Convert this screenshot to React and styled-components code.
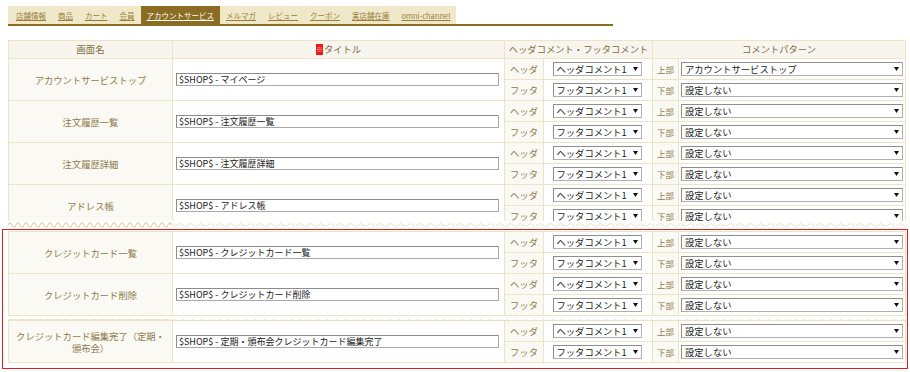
import React from 'react'
import styled, { createGlobalStyle } from 'styled-components'

const GlobalStyle = createGlobalStyle`
  html, body { margin: 0; padding: 0; background: #fff; }
  body {
    font-family: "Noto Sans CJK JP", "Noto Sans", sans-serif;
    color: #8d7a4c;
  }
`

const BORDER = '#ede4c6'

const Page = styled.div`
  width: 910px;
  padding: 6px 2px 0 2px;
  box-sizing: border-box;
`

// タブ
const TabBar = styled.div`
  margin-left: 6px;
  width: 605px;
  border-bottom: 2px solid #8a6c22;
  display: flex;
`
const TabList = styled.div`
  display: flex;
  background: #efe8c9;
  height: 18px;
  padding-left: 2px;
`
const Tab = styled.a`
  display: flex;
  align-items: center;
  padding: 0 6px;
  font-size: 7.5px;
  text-decoration: underline;
  color: ${p => (p.$active ? '#fff' : '#9a7f3a')};
  background: ${p => (p.$active ? '#8a6c23' : 'transparent')};
  white-space: nowrap;
`

// 表
const Clip = styled.div`
  margin: 14px 0 0 6px;
  height: ${p => p.$h}px;
  overflow: hidden;
`
const Grid = styled.div`
  display: grid;
  grid-template-columns: 163px 331px 38px 108px 25px 1fr;
  grid-template-rows: ${p => (p.$head ? '17px' : '20px')};
  grid-auto-rows: 20px;
  gap: 1px;
  width: 898px;
  box-sizing: border-box;
  background: ${BORDER};
  border: 1px solid ${BORDER};
  font-size: 9.3px;
`
const HeadCell = styled.div`
  grid-column: span ${p => p.$span || 1};
  background: #f7f5ee;
  color: #7d6b44;
  display: flex;
  align-items: center;
  justify-content: center;
  line-height: 1;
`
const Mark = styled.span`
  display: inline-block;
  background: #f01818;
  color: #ffb8b8;
  font-size: 7px;
  padding: 1px 0;
  line-height: 9px;
  margin-right: 1px;
`
const NameCell = styled.div`
  grid-row: span 2;
  background: #faf9f4;
  display: flex;
  align-items: center;
  justify-content: center;
  padding: 0 6px;
`
const NameText = styled.span`
  display: block;
  text-align: center;
  line-height: 12px;
`
const TitleCell = styled.div`
  grid-row: span 2;
  background: #fff;
  display: flex;
  align-items: center;
  padding-left: 3px;
`
const TextInput = styled.div`
  width: 323px;
  height: 13px;
  box-sizing: border-box;
  border: 1px solid #a9a9a9;
  border-top-color: #8c8c8c;
  border-left-color: #8c8c8c;
  font-size: 9px;
  color: #1a1a1a;
  line-height: 11px;
  padding-left: 2px;
  white-space: nowrap;
`
const LabelCell = styled.div`
  background: #faf9f4;
  display: flex;
  align-items: center;
  justify-content: center;
  font-size: ${p => (p.$small ? '8.5px' : '9.3px')};
`
const SelectCell = styled.div`
  background: #fff;
  display: flex;
  align-items: center;
  justify-content: ${p => (p.$wide ? 'flex-start' : 'center')};
  padding: ${p => (p.$wide ? '0 2px' : '0 2px 0 0')};
`
const SelectBox = styled.div`
  width: ${p => (p.$wide ? '100%' : '89px')};
  height: 14px;
  box-sizing: border-box;
  border: 1px solid #b0b0b0;
  border-top-color: #8e8e8e;
  border-left-color: #8e8e8e;
  display: flex;
  align-items: center;
  justify-content: space-between;
  padding: 0 3px 0 3px;
  font-size: 9.3px;
  color: #1a1a1a;
  white-space: nowrap;
`

// 切り取り線
const Tear = styled.div`
  height: ${p => p.$h}px;
  margin-left: ${p => p.$ml || 0}px;
  line-height: 0;
`

const RedBox = styled.div`
  border: 1px solid #e81c1c;
  padding: 1px 1px 5px 5px;
`

const Arrow = () => (
  <svg width="5" height="4" viewBox="0 0 5 4">
    <path d="M0 0 L5 0 L2.5 4 Z" fill="#111" />
  </svg>
)

const TearLine = ({ id }) => (
  <svg width="898" height="8">
    <defs>
      <pattern id={id + 'a'} width="8" height="8" patternUnits="userSpaceOnUse">
        <path d="M0 4 Q2 0 4 4 Q6 8 8 4" fill="none" stroke="#e4d9b6" strokeWidth="1.4" />
      </pattern>
      <pattern id={id + 'b'} width="10" height="8" patternUnits="userSpaceOnUse">
        <path d="M0 4 Q2.5 1 5 4 Q7.5 7 10 4" fill="none" stroke="#e6dcbc" strokeWidth="0.9" />
      </pattern>
    </defs>
    <rect x="0" y="0" width="164" height="8" fill={`url(#${id}a)`} />
    <rect x="164" y="0" width="734" height="8" fill={`url(#${id}b)`} />
  </svg>
)

const TearTeeth = ({ id }) => (
  <svg width="898" height="4">
    <defs>
      <pattern id={id + 'a'} width="9" height="4" patternUnits="userSpaceOnUse">
        <path d="M0 0 L9 0 L4.5 4 Z" fill="#ece3c2" />
      </pattern>
      <pattern id={id + 'b'} width="9" height="4" patternUnits="userSpaceOnUse">
        <path d="M0 4 L4.5 0.5 L9 4" fill="none" stroke="#e3d9b8" strokeWidth="0.9" />
      </pattern>
    </defs>
    <rect x="0" y="0" width="164" height="4" fill={`url(#${id}a)`} />
    <rect x="164" y="0" width="734" height="4" fill={`url(#${id}b)`} />
  </svg>
)

const tabs = ['店舗情報', '商品', 'カート', '会員', 'アカウントサービス', 'メルマガ', 'レビュー', 'クーポン', '実店舗在庫', 'omni-channel']

const rows = [
  { name: 'アカウントサービストップ', title: '$SHOP$ - マイページ', top: 'アカウントサービストップ' },
  { name: '注文履歴一覧', title: '$SHOP$ - 注文履歴一覧' },
  { name: '注文履歴詳細', title: '$SHOP$ - 注文履歴詳細' },
  { name: 'アドレス帳', title: '$SHOP$ - アドレス帳' },
  { name: 'クレジットカード一覧', title: '$SHOP$ - クレジットカード一覧' },
  { name: 'クレジットカード削除', title: '$SHOP$ - クレジットカード削除' },
  { name: <>クレジットカード編集完了（定期・<br />頒布会）</>, title: '$SHOP$ - 定期・頒布会クレジットカード編集完了' },
]

function Row({ row }) {
  return (
    <>
      <NameCell><NameText>{row.name}</NameText></NameCell>
      <TitleCell><TextInput>{row.title}</TextInput></TitleCell>
      <LabelCell>ヘッダ</LabelCell>
      <SelectCell><SelectBox>ヘッダコメント1<Arrow /></SelectBox></SelectCell>
      <LabelCell $small>上部</LabelCell>
      <SelectCell $wide><SelectBox $wide>{row.top || '設定しない'}<Arrow /></SelectBox></SelectCell>
      <LabelCell>フッタ</LabelCell>
      <SelectCell><SelectBox>フッタコメント1<Arrow /></SelectBox></SelectCell>
      <LabelCell $small>下部</LabelCell>
      <SelectCell $wide><SelectBox $wide>設定しない<Arrow /></SelectBox></SelectCell>
    </>
  )
}

export default function App() {
  return (
    <Page>
      <GlobalStyle />
      <TabBar>
        <TabList>
          {tabs.map(t => (
            <Tab key={t} $active={t === 'アカウントサービス'}>{t}</Tab>
          ))}
        </TabList>
      </TabBar>

      <Clip $h={181}>
        <Grid $head>
          <HeadCell>画面名</HeadCell>
          <HeadCell><Mark>※</Mark>タイトル</HeadCell>
          <HeadCell $span={2}>ヘッダコメント・フッタコメント</HeadCell>
          <HeadCell $span={2}>コメントパターン</HeadCell>
          {rows.slice(0, 4).map((r, i) => <Row key={i} row={r} />)}
        </Grid>
      </Clip>
      <Tear $h={8} $ml={6}><TearLine id="t1" /></Tear>

      <RedBox>
        <Grid>
          {rows.slice(4, 6).map((r, i) => <Row key={i} row={r} />)}
        </Grid>
        <Tear $h={4}><TearTeeth id="t2" /></Tear>
        <Grid>
          <Row row={rows[6]} />
        </Grid>
      </RedBox>
    </Page>
  )
}
